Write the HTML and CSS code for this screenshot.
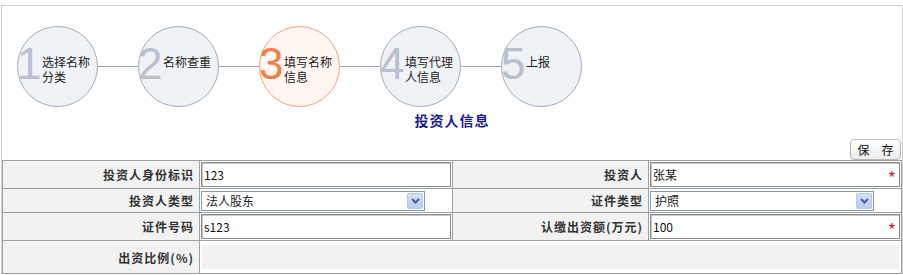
FILE: index.html
```html
<!DOCTYPE html>
<html lang="zh-CN">
<head>
    <meta charset="UTF-8">
    <title>投资人信息</title>
    <link rel="stylesheet" href="styles.css">
</head>
<body>
    <div class="wrap">
        <div class="steps">
            <div class="step"><span class="num">1</span><span class="txt">选择名称分类</span></div>
            <span class="link"></span>
            <div class="step"><span class="num">2</span><span class="txt">名称查重</span></div>
            <span class="link"></span>
            <div class="step active"><span class="num">3</span><span class="txt">填写名称信息</span></div>
            <span class="link"></span>
            <div class="step"><span class="num">4</span><span class="txt">填写代理人信息</span></div>
            <span class="link"></span>
            <div class="step"><span class="num">5</span><span class="txt">上报</span></div>
        </div>
        <h2 class="title">投资人信息</h2>
        <div class="bar"><button class="btn">保　存</button></div>
        <table class="form">
            <colgroup>
                <col class="c-lbl1"><col class="c-val1"><col class="c-lbl2"><col class="c-val2">
            </colgroup>
            <tr class="r-in">
                <td class="lbl">投资人身份标识</td>
                <td class="val"><div class="field"><span>123</span></div></td>
                <td class="lbl">投资人</td>
                <td class="val"><div class="field"><span>张某</span><span class="req">*</span></div></td>
            </tr>
            <tr class="r-sel">
                <td class="lbl">投资人类型</td>
                <td class="val"><div class="select"><span>法人股东</span><span class="drop"><svg width="9" height="6" viewBox="0 0 9 6"><path d="M1 1 L4.5 4.5 L8 1" fill="none" stroke="#4d5f80" stroke-width="2"/></svg></span></div></td>
                <td class="lbl">证件类型</td>
                <td class="val"><div class="select"><span>护照</span><span class="drop"><svg width="9" height="6" viewBox="0 0 9 6"><path d="M1 1 L4.5 4.5 L8 1" fill="none" stroke="#4d5f80" stroke-width="2"/></svg></span></div></td>
            </tr>
            <tr class="r-in">
                <td class="lbl">证件号码</td>
                <td class="val"><div class="field"><span>s123</span></div></td>
                <td class="lbl">认缴出资额(万元)</td>
                <td class="val"><div class="field"><span>100</span><span class="req">*</span></div></td>
            </tr>
            <tr class="r-ro">
                <td class="lbl">出资比例(%)</td>
                <td class="val ro" colspan="3"><div class="readonly"></div></td>
            </tr>
        </table>
    </div>
</body>
</html>
```

FILE: styles.css
```css
html, body {
    margin: 0;
    padding: 0;
    background: #fff;
}
body {
    font-family: "Noto Sans CJK SC", "Liberation Sans", sans-serif;
    font-size: 12px;
    color: #222;
}
.wrap {
    margin: 5px 0 0 1px;
    width: 900px;
    border: 1px solid #d0d0d0;
    border-bottom: none;
}
.steps {
    display: flex;
    align-items: center;
    padding: 20px 0 0 15px;
}
.step {
    box-sizing: border-box;
    width: 81px;
    height: 81px;
    border: 1px solid #a3aabb;
    border-radius: 50%;
    background-color: #f0f3f5;
    display: flex;
    align-items: flex-start;
    padding-top: 15px;
}
.step .num {
    font-family: "Liberation Sans", Arial, sans-serif;
    font-size: 44px;
    line-height: 44px;
    width: 25px;
    margin-left: -1px;
    color: #b9bfcc;
}
.step .txt {
    width: 52px;
    margin-top: 12px;
    line-height: 15px;
    font-size: 12px;
    color: #222;
}
.step.active {
    border-color: #f4a27c;
    background-color: #fff5f1;
}
.step.active .num {
    color: #f08048;
}
.link {
    width: 40px;
    height: 1px;
    background-color: #9ca3b4;
}
.title {
    margin: 4px 0 0 0;
    text-align: center;
    font-size: 14px;
    line-height: 18px;
    font-weight: bold;
    letter-spacing: 1px;
    color: #1c1c90;
}
.bar {
    display: flex;
    justify-content: flex-end;
    margin-top: 10px;
    padding-right: 1px;
}
.btn {
    box-sizing: border-box;
    width: 51px;
    height: 21px;
    padding: 0;
    border: 1px solid #b8b8b8;
    border-radius: 4px;
    background: linear-gradient(#ffffff, #ececec);
    font-family: "Noto Sans CJK SC", sans-serif;
    font-size: 12px;
    color: #111;
}
.form {
    width: 899px;
    border-collapse: collapse;
    table-layout: fixed;
    border: 1px solid #999;
}
.c-lbl1 { width: 197px; }
.c-val1 { width: 253px; }
.c-lbl2 { width: 196px; }
.c-val2 { width: 253px; }
.form td {
    border: 1px solid #a0a0a0;
    padding: 1px;
}
.form td.lbl {
    background-color: #f2f2f2;
    text-align: right;
    padding-right: 5px;
    font-weight: bold;
    letter-spacing: 1px;
    color: #333;
}
.r-in td { height: 25px; }
.r-sel td { height: 21px; }
.r-ro td { height: 28px; }
.field {
    box-sizing: border-box;
    height: 25px;
    display: flex;
    align-items: center;
    justify-content: space-between;
    padding: 0 4px 0 2px;
    border: 1px solid #8a8a8a;
    box-shadow: inset 1px 1px 0 #c8c8c8;
    background: #fff;
    color: #111;
}
.req {
    color: #cc0000;
    font-family: "Liberation Sans", sans-serif;
    font-size: 16px;
    line-height: 16px;
    padding-top: 6px;
}
.select {
    box-sizing: border-box;
    width: 224px;
    height: 20px;
    display: flex;
    align-items: center;
    justify-content: space-between;
    padding: 0 1px 0 4px;
    border: 1px solid #7f9db9;
    background: #fff;
    color: #222;
}
.drop {
    box-sizing: border-box;
    width: 16px;
    height: 16px;
    border: 1px solid #b6c7f0;
    border-radius: 2px;
    background: linear-gradient(#d4e0fd, #b9cbf7);
    display: flex;
    align-items: center;
    justify-content: center;
}
.form td.ro {
    padding: 2px;
}
.readonly {
    height: 24px;
    background-color: #f2f2f2;
}
```
